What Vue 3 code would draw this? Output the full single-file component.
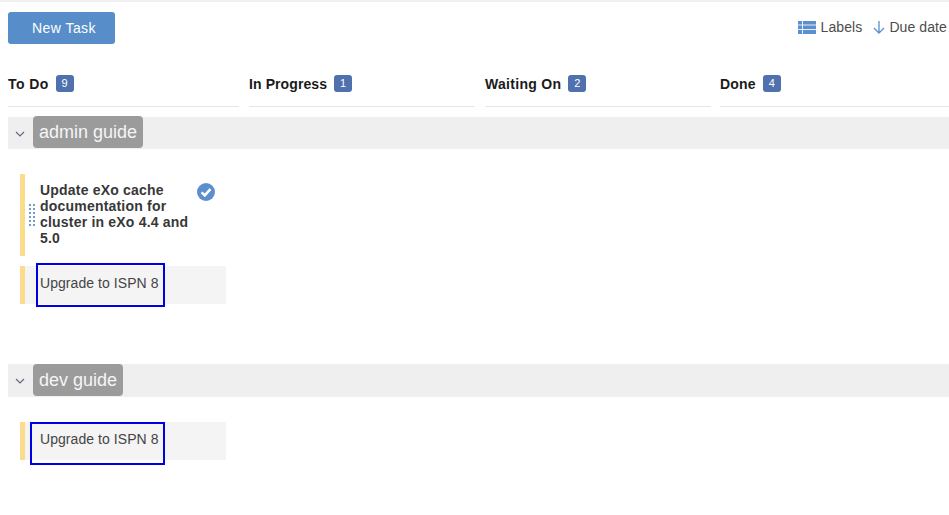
<script setup>
const columns = [
  { name: 'To Do', count: 9, spacing: '0.4px' },
  { name: 'In Progress', count: 1, spacing: '0.1px' },
  { name: 'Waiting On', count: 2, spacing: '0.3px' },
  { name: 'Done', count: 4, spacing: '0.2px' }
]
</script>

<template>
  <div class="page">
    <header class="toolbar">
      <button class="new-task">New Task</button>
      <div class="tools">
        <span class="tool">
          <svg class="ic-labels" width="18" height="13" viewBox="0 0 18 13">
            <rect width="18" height="13" fill="#5b8fcd" />
            <path d="M0 4h18M0 8.5h18M4.5 0v13" stroke="#fff" stroke-width="1" fill="none" opacity=".85" />
          </svg>
          Labels
        </span>
        <span class="tool">
          <svg width="12" height="14" viewBox="0 0 12 14">
            <path d="M6 1v12M1 8l5 5 5-5" stroke="#5b8fcd" stroke-width="1.3" fill="none" />
          </svg>
          Due date
        </span>
      </div>
    </header>

    <div class="columns">
      <div v-for="c in columns" :key="c.name" class="column">
        <b :style="{ letterSpacing: c.spacing }">{{ c.name }}</b><span class="badge">{{ c.count }}</span>
      </div>
    </div>

    <section class="group first">
      <div class="group-bar">
        <svg class="chev" width="10" height="6" viewBox="0 0 10 6">
          <path d="M1 1l4 4 4-4" stroke="#5f6b7a" stroke-width="1.2" fill="none" />
        </svg>
        <span class="pill">admin guide</span>
      </div>
      <div class="card open">
        <span class="grip"></span>
        <div class="card-title">Update eXo cache documentation for cluster in eXo 4.4 and 5.0</div>
        <svg class="check" width="18" height="18" viewBox="0 0 18 18">
          <circle cx="9" cy="9" r="9" fill="#5b8fcd" />
          <path d="M4.6 9.4l3.2 3 5.6-6.2" stroke="#fff" stroke-width="2.6" fill="none" />
        </svg>
      </div>
      <div class="card plain">
        <span class="card-text">Upgrade to ISPN 8</span>
        <span class="focus focus-a"></span>
      </div>
    </section>

    <section class="group second">
      <div class="group-bar tall">
        <svg class="chev" width="10" height="6" viewBox="0 0 10 6">
          <path d="M1 1l4 4 4-4" stroke="#5f6b7a" stroke-width="1.2" fill="none" />
        </svg>
        <span class="pill">dev guide</span>
      </div>
      <div class="card plain">
        <span class="card-text">Upgrade to ISPN 8</span>
        <span class="focus focus-b"></span>
      </div>
    </section>
  </div>
</template>

<style>
html, body { margin: 0; background: #fff; }
</style>

<style scoped>
.page {
  width: 949px;
  height: 515px;
  overflow: hidden;
  box-sizing: border-box;
  border-top: 2px solid #f0f0f0;
  font-family: "Liberation Sans", Arial, sans-serif;
  font-size: 14px;
  color: #333;
}
.toolbar {
  display: flex;
  justify-content: space-between;
  align-items: flex-start;
  padding: 10px 2px 0 8px;
}
.new-task {
  width: 107px;
  height: 32px;
  border: 0;
  border-radius: 3px;
  background: #578dc9;
  color: #fff;
  font: 14px "Liberation Sans", Arial, sans-serif;
  letter-spacing: 0.45px;
  padding: 0 0 0 5px;
}
.tools {
  display: flex;
  gap: 11px;
  padding-top: 7px;
  color: #4d4d4d;
  letter-spacing: 0.1px;
}
.tool {
  display: flex;
  align-items: center;
  gap: 4px;
  line-height: 16px;
}
.ic-labels { margin-right: 1px; }
.columns {
  display: grid;
  grid-template-columns: 231px 226px 226px 229px;
  column-gap: 10px;
  margin: 24px 0 0 8px;
}
.column {
  display: flex;
  align-items: center;
  height: 39px;
  padding-bottom: 7px;
  box-sizing: border-box;
  border-bottom: 1px solid #e1e6ec;
  color: #1a1a1a;
}
.column:last-child { margin-left: -1px; }
.badge {
  margin-left: 7px;
  width: 18px;
  height: 17px;
  line-height: 17px;
  border-radius: 3px;
  background: #4f71ad;
  color: #fff;
  font-size: 11px;
  text-align: center;
}
.group-bar {
  display: flex;
  align-items: flex-start;
  margin-left: 8px;
  height: 32px;
  background: #efefef;
}
.group-bar.tall { height: 33px; }
.tall .pill { margin-top: 0; }
.first { margin-top: 10px; }
.second { margin-top: 60px; }
.chev { margin: 14px 8px 0 7px; }
.pill {
  height: 32px;
  margin-top: -1px;
  padding: 0 6px;
  line-height: 32px;
  border-radius: 4px;
  background: #9b9b9b;
  color: #f5f5f5;
  font-size: 18px;
}
.card {
  position: relative;
  margin-left: 20px;
  width: 206px;
  box-sizing: border-box;
  border-left: 5px solid #fbdc8c;
}
.open {
  margin-top: 25px;
  height: 82px;
  padding: 8px 32px 0 15px;
}
.group.first .plain { margin-top: 10px; }
.group.second .plain { margin-top: 25px; }
.plain {
  height: 38px;
  padding-left: 15px;
  background: #f4f4f4;
  line-height: 34px;
}
.card-title {
  font-weight: 700;
  line-height: 16px;
  letter-spacing: 0.2px;
  color: #383838;
}
.card-text { color: #444; letter-spacing: 0.06px; }
.grip {
  position: absolute;
  left: 4px;
  top: 30px;
  width: 6px;
  height: 23px;
  background-image: repeating-linear-gradient(to bottom, #6f9fd2 0 2px, transparent 2px 4px);
  -webkit-mask-image: repeating-linear-gradient(to right, #000 0 2px, transparent 2px 4px);
  mask-image: repeating-linear-gradient(to right, #000 0 2px, transparent 2px 4px);
}
.check {
  position: absolute;
  left: 172px;
  top: 9px;
}
.focus {
  position: absolute;
  box-sizing: border-box;
  border: 2px solid #0000e6;
}
.focus-a { left: 11px; top: -3px; width: 129px; height: 44px; }
.focus-b { left: 5px; top: 0; width: 135px; height: 43px; }
</style>
